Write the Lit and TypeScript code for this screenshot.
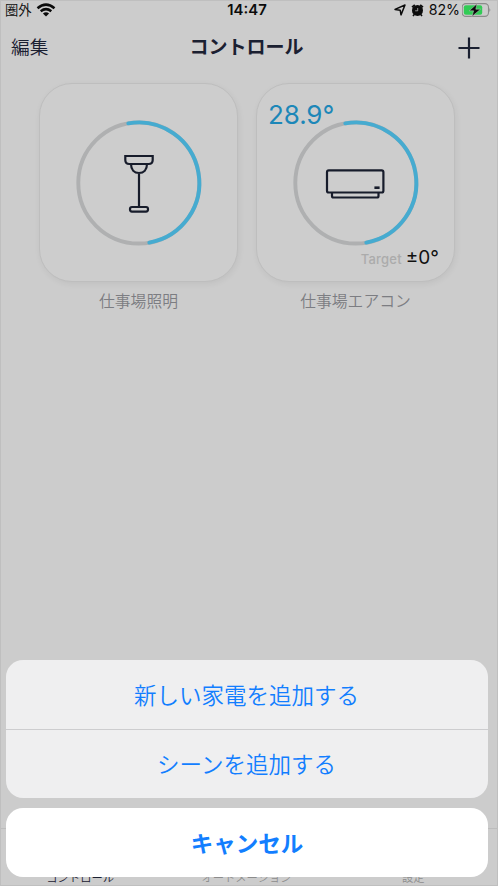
import { LitElement, html, css, svg, nothing } from "lit";
import { customElement, property } from "lit/decorators.js";

@customElement("device-card")
class DeviceCard extends LitElement {
  @property() kind = "lamp";
  @property() label = "";
  @property() temp = "";
  @property() target = "";

  static styles = css`
    :host { display: block; width: 199px; }
    .card {
      position: relative; box-sizing: border-box; width: 199px; height: 199px;
      border: 1px solid #bebebe; border-radius: 33px; background: #cdcdcd;
      box-shadow: 1px 2px 6px rgba(0, 0, 0, 0.06);
    }
    .art { display: block; width: 197px; height: 197px; }
    .temp {
      position: absolute; left: 11px; top: 15px; color: #1c87b8;
      font: 400 26px/32px Inter, sans-serif; letter-spacing: -0.1px;
    }
    .target {
      position: absolute; right: 15px; bottom: 8px; display: flex; align-items: baseline;
      gap: 4px; font: 400 19px/28px Inter, sans-serif; color: #111;
    }
    .word { font-size: 13px; font-weight: 500; color: #ababab; letter-spacing: 0.2px; }
    .label {
      margin-top: 7px; text-align: center; color: #7c7d82;
      font: 350 15.8px/24px "Noto Sans CJK JP", sans-serif;
    }
  `;

  // Drawing coordinates are relative to the inner edge of the card.
  lamp() {
    return svg`
      <path d="M85.3 72H112.7V76Q112.7 80 108.7 80H89.3Q85.3 80 85.3 76Z" />
      <path d="M91 80C91 86 94.4 89 99 89S107 86 107 80M99 89V122.5" />
      <rect x="90" y="123" width="18" height="4.6" rx="2" />`;
  }

  aircon() {
    return svg`
      <rect x="70" y="86.3" width="56.4" height="22.2" rx="1.8" />
      <path d="M75 108.5V112Q75 113.5 76.5 113.5H120Q121.5 113.5 121.5 112V108.5" />
      <path d="M117.4 103.7H122.6" stroke-width="2.6" />`;
  }

  render() {
    return html`
      <div class="card">
        <svg class="art" viewBox="0 0 197 197" fill="none">
          <circle cx="98.8" cy="99" r="60.5" stroke="#afb0b1" stroke-width="3.9" />
          <path d="M88.3 39.4A60.5 60.5 0 0 1 109.3 158.6" stroke="#46abd0" stroke-width="3.9" stroke-linecap="round" />
          <g stroke="#171c2b" stroke-width="2.2">${this.kind === "lamp" ? this.lamp() : this.aircon()}</g>
        </svg>
        ${this.temp ? html`<div class="temp">${this.temp}</div>` : nothing}
        ${this.target
          ? html`<div class="target"><span class="word">Target</span><span>${this.target}</span></div>`
          : nothing}
      </div>
      <div class="label">${this.label}</div>
    `;
  }
}

@customElement("app-root")
class AppRoot extends LitElement {
  static styles = css`
    :host {
      display: block; position: relative; box-sizing: border-box; width: 498px; height: 886px;
      overflow: hidden; background: #cccccc; border: 1px solid #bfbfbf;
      font-family: Inter, "Noto Sans CJK JP", sans-serif;
    }
    .screen { display: flex; flex-direction: column; height: 884px; }
    .status {
      display: grid; grid-template-columns: 1fr auto 1fr; align-items: center;
      height: 18px; padding: 0 6px 0 4px; color: #0b0b0b; font-size: 14.2px; line-height: 18px;
    }
    .status svg { display: block; }
    .left, .right { display: flex; align-items: center; }
    .carrier { font: 350 13.3px/18px "Noto Sans CJK JP", sans-serif; margin-right: 4px; }
    .clock { font-weight: 600; font-size: 14.9px; padding-right: 2px; }
    .right { justify-content: flex-end; }
    .pct { margin: 0 2px 0 5px; }
    .alarm { margin-left: 4px; }
    .nav {
      display: grid; grid-template-columns: 1fr auto 1fr; align-items: center;
      height: 54px; padding: 0 17px 0 10px; color: #1b2031;
      font-family: "Noto Sans CJK JP", sans-serif; line-height: 28px;
    }
    .edit { font-size: 18.7px; font-weight: 350; }
    .title { font-size: 19px; font-weight: 700; padding-left: 2px; }
    .plus { justify-self: end; display: block; margin-top: 4px; }
    .cards { display: flex; gap: 18px; padding: 10px 0 0 38px; }
    .tabs {
      margin-top: auto; display: grid; grid-template-columns: repeat(3, 1fr); align-items: end;
      height: 58px; box-sizing: border-box; border-top: 1px solid #bdbdbd; text-align: center;
      margin-bottom: -1px; padding-bottom: 1px;
      font: 350 11.3px/15px "Noto Sans CJK JP", sans-serif; color: #8c8c8c;
    }
    .on { color: #1b2031; padding-right: 7px; }
    .mid { padding-right: 5px; }
    .last { padding-right: 2px; }
    .sheet {
      position: absolute; left: 5px; right: 9px; bottom: 8px;
      display: flex; flex-direction: column; gap: 10px;
      font: 350 22.5px/68px "Noto Sans CJK JP", sans-serif; color: #127eff; text-align: center;
    }
    .group, .cancel { border-radius: 17px; overflow: hidden; }
    .group { background: #efeff0; height: 138px; }
    .item { height: 69px; box-sizing: border-box; padding-right: 1px; }
    .item + .item { border-top: 1px solid #cdcdcf; line-height: 67px; }
    .cancel { background: #fff; height: 69px; font-weight: 700; }
  `;

  render() {
    return html`
      <div class="screen">
        <div class="status">
          <div class="left">
            <span class="carrier">圏外</span>
            <svg width="20" height="14" viewBox="0 0 20 14" fill="none" stroke="#0b0b0b" stroke-width="2.5">
              <path d="M1.5 5.3Q10 -2 18.5 5.3M4.7 8.3Q10 4 15.3 8.3" />
              <path d="M10 13.5L6.9 10.4Q10 8 13.1 10.4Z" fill="#0b0b0b" stroke="none" />
            </svg>
          </div>
          <div class="clock">14:47</div>
          <div class="right">
            <svg width="13" height="13" viewBox="0 0 13 13" fill="none" stroke="#0b0b0b" stroke-width="1.5" stroke-linejoin="round">
              <path d="M1 5.4L11 1L7 10.9L6.2 6.2Z" />
            </svg>
            <svg class="alarm" width="13" height="13" viewBox="0 0 13 13">
              <circle cx="6.5" cy="6.4" r="5.5" fill="#0b0b0b" />
              <path d="M1 3.2L3.8 0.8M12 3.2L9.2 0.8M3.2 10.5L2 12M9.8 10.5L11 12" stroke="#0b0b0b" stroke-width="1.6" />
              <path d="M6.7 4V6.8H4.2" stroke="#ccc" stroke-width="0.7" fill="none" />
            </svg>
            <span class="pct">82%</span>
            <svg width="29" height="15" viewBox="0 0 29 15">
              <rect x="-0.4" y="0.6" width="26.3" height="12.8" rx="3.6" transform="translate(0.6 0)" fill="none" stroke="#8b8b8b" stroke-width="1.1" />
              <rect x="1.8" y="2.2" width="18.4" height="9.6" rx="2" fill="#31cb55" />
              <path d="M27.4 4.9Q29.2 7 27.4 9.1Z" fill="#8b8b8b" />
              <path d="M15 0.8L7.2 7.8H11.6L10 13.4L18.6 6.2H13.8Z" fill="#0b0b0b" stroke="#ccc" stroke-width="0.5" />
            </svg>
          </div>
        </div>
        <div class="nav">
          <div class="edit">編集</div>
          <div class="title">コントロール</div>
          <svg class="plus" width="22" height="22" viewBox="0 0 22 22" fill="none" stroke="#1b2031" stroke-width="2.2">
            <path d="M11 0.5V21.5M0.5 11H21.5" />
          </svg>
        </div>
        <div class="cards">
          <device-card kind="lamp" label="仕事場照明"></device-card>
          <device-card kind="aircon" label="仕事場エアコン" temp="28.9°" target="±0°"></device-card>
        </div>
        <div class="tabs">
          <div class="on">コントロール</div>
          <div class="mid">オートメーション</div>
          <div class="last">設定</div>
        </div>
      </div>
      <div class="sheet">
        <div class="group">
          <div class="item">新しい家電を追加する</div>
          <div class="item">シーンを追加する</div>
        </div>
        <div class="cancel">キャンセル</div>
      </div>
    `;
  }
}
